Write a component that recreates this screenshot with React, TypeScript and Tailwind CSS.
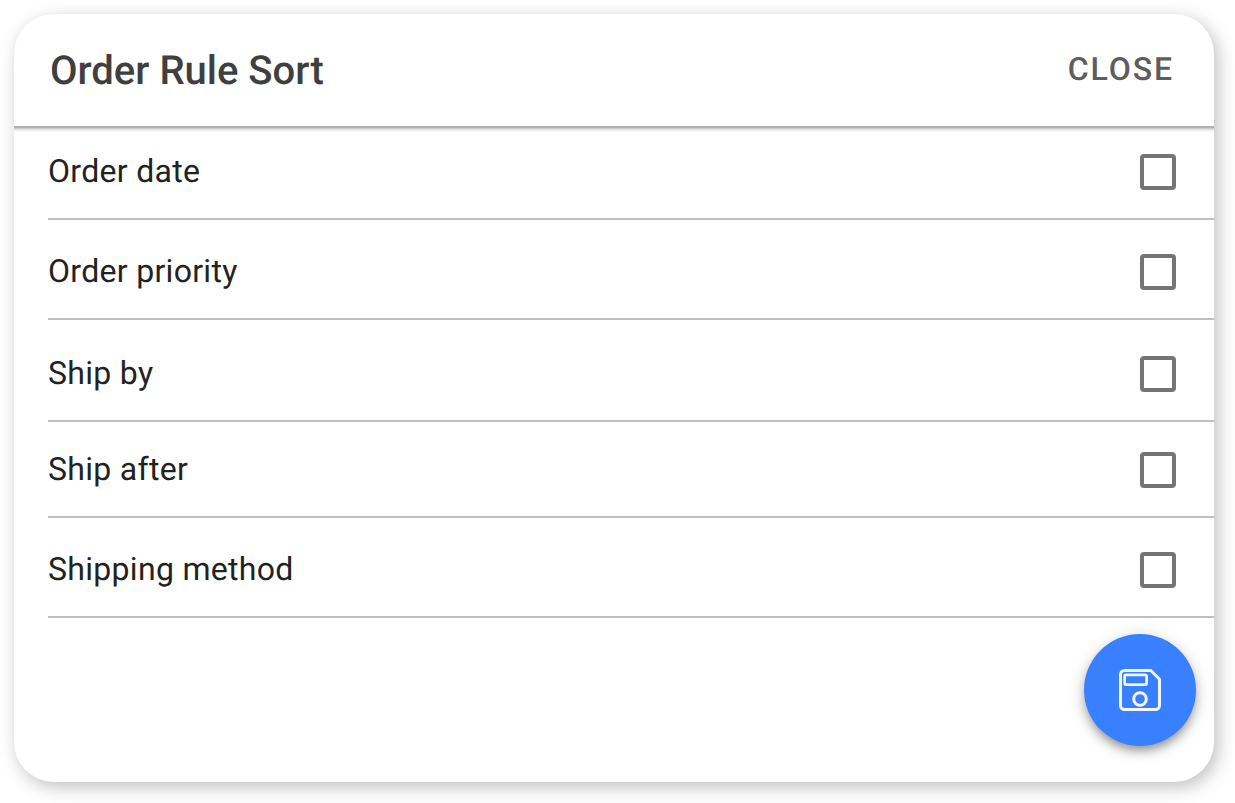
const rows = [
  { label: "Order date", height: "h-[94px]" },
  { label: "Order priority", height: "h-[100px]" },
  { label: "Ship by", height: "h-[102px]" },
  { label: "Ship after", height: "h-[96px]" },
  { label: "Shipping method", height: "h-[100px]" },
];

function SaveIcon() {
  return (
    <svg width="42" height="42" viewBox="0 0 42 42" fill="none" stroke="#f4f5f8" strokeWidth="3" aria-hidden="true">
      <path d="M5.5 1.5H31.8L40.5 10.3V36.5a4 4 0 0 1-4 4H5.5a4 4 0 0 1-4-4V5.5a4 4 0 0 1 4-4Z" />
      <rect x="5.6" y="5.8" width="22" height="9.8" rx="1.5" strokeWidth="2.8" />
      <circle cx="21" cy="30" r="6.3" />
    </svg>
  );
}

export default function App() {
  return (
    <main className="h-[803px] w-[1235px] overflow-hidden bg-white p-[14px] font-['Roboto',sans-serif] [text-rendering:geometricPrecision]">
      <section className="flex h-[768px] w-[1200px] flex-col rounded-[40px] bg-white shadow-[4px_5px_18px_rgba(0,0,0,0.25)]">
        <header className="relative flex h-[112px] shrink-0 items-center justify-between pr-10 pl-9">
          <h1 className="pt-px text-[40px] leading-[48px] font-medium text-[#3f3f3f]">Order Rule Sort</h1>
          <button className="pb-[2px] text-[32px] leading-10 font-medium tracking-[1.92px] text-[#5d5d5d] [text-rendering:geometricPrecision]">
            CLOSE
          </button>
          <div className="absolute inset-x-0 top-full h-[7px] bg-[linear-gradient(#b0b0b0_0,#b4b4b4_1.5px,#cbcbcb_2.5px,#dfdfdf_3.5px,#eeeeee_4.5px,#f9f9f9_5.5px,#ffffff_7px)]" />
        </header>
        <ul className="pl-[34px]">
          {rows.map((row) => (
            <li key={row.label} className={`${row.height} flex items-end border-b-2 border-[#bfbfbf] pr-[38px] pb-7`}>
              <label className="flex h-9 flex-1 items-center justify-between text-[32px] leading-9 text-[#222222]">
                <span className="pb-[2px] tracking-[0.3px]">{row.label}</span>
                <input type="checkbox" className="size-9 appearance-none rounded-[4px] border-4 border-[#757575]" />
              </label>
            </li>
          ))}
        </ul>
        <div className="mt-4 flex justify-end pr-[18px]">
          <button
            aria-label="Save"
            className="flex size-28 items-center justify-center rounded-full bg-[#3880ff] shadow-[0_6px_10px_-2px_rgba(0,0,0,0.3),0_4px_16px_rgba(0,0,0,0.22)]"
          >
            <SaveIcon />
          </button>
        </div>
      </section>
    </main>
  );
}
